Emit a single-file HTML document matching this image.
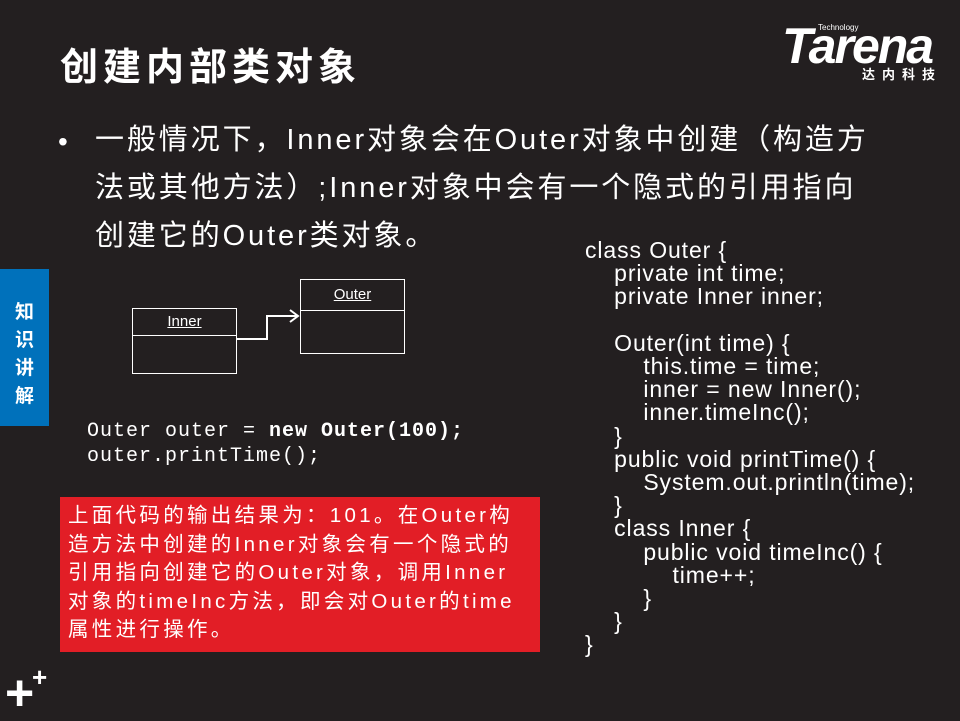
<!DOCTYPE html>
<html><head><meta charset="utf-8"><style>
body{margin:0;width:960px;height:720px;background:#231f20;position:relative;overflow:hidden;font-family:"Liberation Sans","Noto Sans CJK SC",sans-serif;color:#fff}
.a{position:absolute;white-space:nowrap}
h1{position:absolute;left:60px;top:36px;margin:0;font-size:38px;font-weight:bold;font-family:"Noto Sans CJK SC",sans-serif;letter-spacing:5px}
.bul{left:95px;top:116px;font-size:29px;line-height:48px;letter-spacing:2.9px;font-family:"Liberation Sans","Noto Sans CJK SC",sans-serif}
.side{left:0;top:269px;width:49px;height:157px;background:#0071bb;font-family:"Noto Sans CJK SC",sans-serif;font-weight:bold;font-size:19px;line-height:28px;text-align:center;padding-top:28px;box-sizing:border-box}
.box{position:absolute;border:1px solid #fff;box-sizing:border-box}
.code{font-family:"Liberation Mono","DejaVu Sans Mono",monospace;font-size:20px;line-height:25px;letter-spacing:1px}
.red{left:60px;top:497px;width:480px;height:155px;background:#e21e26;font-size:20.5px;line-height:28.5px;padding:5px 8px;box-sizing:border-box;letter-spacing:3.3px;font-family:"Liberation Sans","Noto Sans CJK SC",sans-serif;overflow:hidden}
.jv{left:585px;top:239px;font-size:23px;line-height:23.2px;letter-spacing:0.9px;font-family:"Liberation Sans",sans-serif;white-space:pre}
</style></head><body>
<h1>创建内部类对象</h1>
<div class="a" style="left:782px;top:17px;font:italic 900 50px 'Liberation Sans',sans-serif;letter-spacing:-2px">Tarena</div>
<div class="a" style="left:818px;top:23px;font-size:8px">Technology</div>
<div class="a" style="left:862px;top:64px;font-size:13px;font-weight:bold;letter-spacing:7px;font-family:'Noto Sans CJK SC',sans-serif">达内科技</div>
<div class="a" style="left:58px;top:118px;font-size:28px;line-height:48px">•</div>
<div class="a bul">一般情况下，Inner对象会在Outer对象中创建（构造方<br>法或其他方法）;Inner对象中会有一个隐式的引用指向<br>创建它的Outer类对象。</div>
<div class="a side">知<br>识<br>讲<br>解</div>
<div class="box" style="left:132px;top:308px;width:105px;height:66px"><div style="height:26px;border-bottom:1px solid #fff;text-align:center;font-size:15px;line-height:26px"><u>Inner</u></div></div>
<div class="box" style="left:300px;top:279px;width:105px;height:75px"><div style="height:30px;border-bottom:1px solid #fff;text-align:center;font-size:15px;line-height:30px"><u>Outer</u></div></div>
<svg class="a" style="left:236px;top:305px" width="66" height="40"><path d="M1 34H31V11H62M54 5L62 11L54 17" stroke="#fff" stroke-width="2" fill="none"/></svg>
<div class="a code" style="left:87px;top:419px">Outer outer = <b>new Outer(100);</b><br>outer.printTime();</div>
<div class="a red">上面代码的输出结果为：101。在Outer构<br>造方法中创建的Inner对象会有一个隐式的<br>引用指向创建它的Outer对象，调用Inner<br>对象的timeInc方法，即会对Outer的time<br>属性进行操作。</div>
<div class="a jv">class Outer {
    private int time;
    private Inner inner;

    Outer(int time) {
        this.time = time;
        inner = new Inner();
        inner.timeInc();
    }
    public void printTime() {
        System.out.println(time);
    }
    class Inner {
        public void timeInc() {
            time++;
        }
    }
}</div>
<div class="a" style="left:5px;top:668px;font-size:50px;font-weight:bold;line-height:50px">+</div>
<div class="a" style="left:32px;top:664px;font-size:26px;font-weight:bold;line-height:26px">+</div>
</body></html>
